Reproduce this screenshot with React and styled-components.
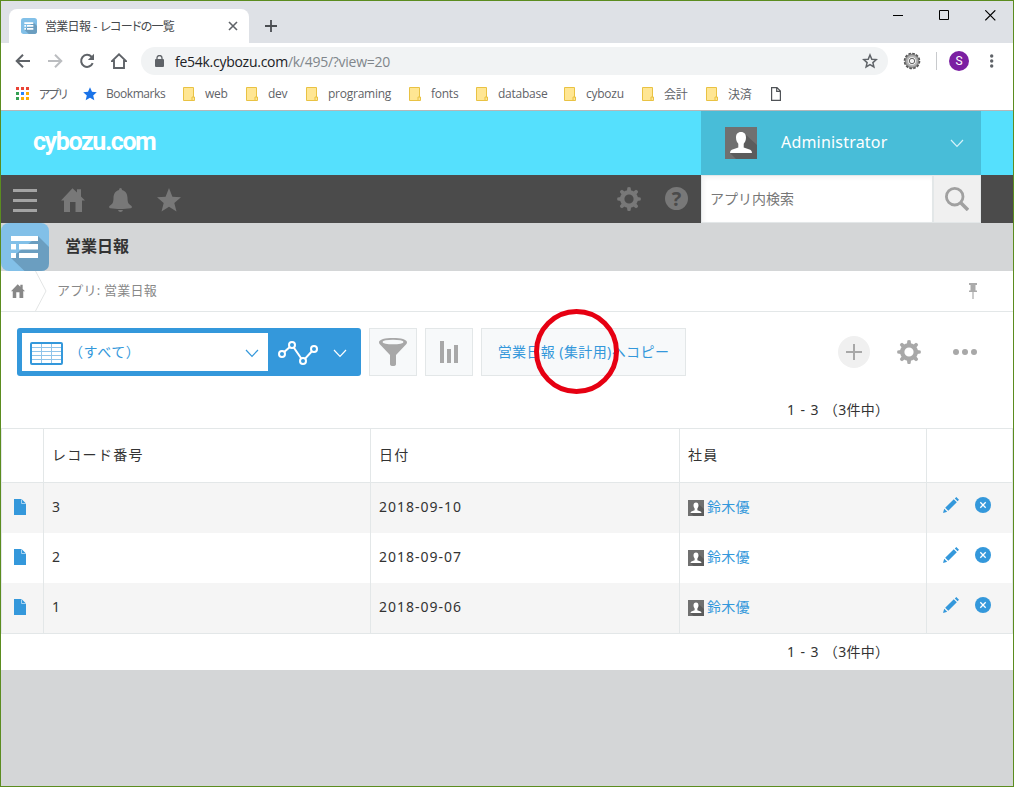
import React from 'react'
import styled, { createGlobalStyle } from 'styled-components';

const bookmarks = [
    { title: "web", width: 63 },
    { title: "dev", width: 60 },
    { title: "programing", width: 103 },
    { title: "fonts", width: 67 },
    { title: "database", width: 88 },
    { title: "cybozu", width: 78 },
    { title: "会計", width: 64 },
    { title: "決済", width: 65 },
];

const records = [
    { id: "3", date: "2018-09-10", member: "鈴木優" },
    { id: "2", date: "2018-09-07", member: "鈴木優" },
    { id: "1", date: "2018-09-06", member: "鈴木優" },
];

const teeth = [0, 45, 90, 135, 180, 225, 270, 315];

function Gear({ size = 24, color }) {
    return (
        <svg width={size} height={size} viewBox="0 0 24 24">
            <circle cx="12" cy="12" r="6.8" fill="none" stroke={color} strokeWidth="4.4" />
            {teeth.map((angle) => (
                <path key={angle} d="M9.9 4 L10.4 0.6 Q12 -0.4 13.6 0.6 L14.1 4z" fill={color} transform={`rotate(${angle} 12 12)`} />
            ))}
        </svg>
    )
}

function House({ size = 24, color }) {
    return (
        <svg width={size} height={size} viewBox="0 0 24 24">
            <path d="M0 12.5 L11.5 0.3 L16 4.6 V1.2 H20 V8.6 L24 12.5 H21 V24 H14.5 V14 H9 V24 H3 V12.5z" fill={color} />
        </svg>
    )
}

function Chevron({ color }) {
    return (
        <svg width="14" height="9" viewBox="0 0 14 9">
            <path d="M1 1 L7 7.3 L13 1" fill="none" stroke={color} strokeWidth="1.2" />
        </svg>
    )
}

function Person({ size }) {
    return (
        <svg width={size} height={size} viewBox="0 0 32 32">
            <path d="M0 0h32v32H0z" fill="#707070" />
            <path d="M20 7 L32 18 V32 H11 L5 26 L18 22z" fill="#5c5c5c" />
            <path d="M16 5c3.4 0 5 2.2 5 5.6 0 3-1 4.8-2.3 6.2v3.6l6.5 2.4q1.8.9 1.8 3.2H5q0-2.3 1.8-3.2l6.5-2.4v-3.6C12 15.4 11 13.6 11 10.6 11 7.2 12.6 5 16 5z" fill="#fff" />
        </svg>
    )
}

function AppIcon({ size }) {
    return (
        <svg width={size} height={size} viewBox="0 0 48 48">
            <rect width="48" height="48" rx="8" fill="#82c0e8" />
            <path d="M37 13 L48 24 V40 Q48 48 40 48 H23.5 L10 35z" fill="#6b9ec0" />
            <path d="M10 13h27v5H10zM10 21h5v5.5h-5zM18 21h19v5.5H18zM10 30h5v5h-5zM18 30h19v5H18z" fill="#fff" />
        </svg>
    )
}

function Browser() {
    return (
        <>
            <TabBar>
                <Tab>
                    <AppIcon size={16} />
                    <TabTitle>営業日報 - レコードの一覧</TabTitle>
                    <svg width="10" height="10" viewBox="0 0 10 10">
                        <path d="M1 1 L9 9 M9 1 L1 9" stroke="#5f6368" strokeWidth="1.6" />
                    </svg>
                </Tab>
                <NewTab width="12" height="12" viewBox="0 0 12 12">
                    <path d="M6 0v12M0 6h12" stroke="#4a4d51" strokeWidth="1.8" />
                </NewTab>
                <WindowButtons>
                    <svg width="11" height="11" viewBox="0 0 11 11"><path d="M0 5.5h10" stroke="#000" /></svg>
                    <svg width="11" height="11" viewBox="0 0 11 11"><path d="M.5.5h9v9h-9z" fill="none" stroke="#000" /></svg>
                    <svg width="11" height="11" viewBox="0 0 11 11"><path d="M.3.3l10 10M10.3.3l-10 10" stroke="#000" strokeWidth="1.2" /></svg>
                </WindowButtons>
            </TabBar>
            <AddressRow>
                <NavIcons>
                    <svg width="16" height="16" viewBox="0 0 16 16"><path d="M15 8H2M8 1.7L1.7 8 8 14.3" fill="none" stroke="#5f6368" strokeWidth="2" /></svg>
                    <svg width="16" height="16" viewBox="0 0 16 16"><path d="M1 8h13M8 1.7L14.3 8 8 14.3" fill="none" stroke="#bbbdc0" strokeWidth="2" /></svg>
                    <svg width="16" height="16" viewBox="0 0 16 16">
                        <path d="M13.7 10.2A6 6 0 1 1 12.5 3.7L14 5.3" fill="none" stroke="#5f6368" strokeWidth="2" />
                        <path d="M15 .8V7H8.8z" fill="#5f6368" />
                    </svg>
                    <svg width="16" height="16" viewBox="0 0 16 16"><path d="M3 8v7h10V8h2L8 1.3 1 8z" fill="none" stroke="#5f6368" strokeWidth="1.9" /></svg>
                </NavIcons>
                <AddressBar>
                    <svg width="9" height="12" viewBox="0 0 9 12">
                        <path d="M2 5V3a2.5 2.5 0 0 1 5 0v2" fill="none" stroke="#5f6368" strokeWidth="1.3" />
                        <rect y="4" width="9" height="8" rx="1" fill="#5f6368" />
                    </svg>
                    <Url><b>fe54k.cybozu.com</b>/k/495/?view=20</Url>
                    <svg width="16" height="16" viewBox="0 0 16 16">
                        <path d="M8 2l1.8 4.2 4.5.4-3.4 3 1 4.4L8 11.7 4.1 14l1-4.4-3.4-3 4.500-.4z" fill="none" stroke="#5f6368" strokeWidth="1.5" />
                    </svg>
                </AddressBar>
                <Extension>
                    <svg width="18" height="18" viewBox="0 0 18 18">
                        <circle cx="9" cy="9" r="5.6" fill="none" stroke="#b4b4b4" strokeWidth="3.6" />
                        <circle cx="9" cy="9" r="7.5" fill="none" stroke="#555" strokeWidth="1.6" strokeDasharray="2.6 1.33" />
                        <circle cx="9" cy="9" r="6.4" fill="none" stroke="#666" strokeWidth=".7" />
                        <circle cx="9" cy="9" r="2.7" fill="#f2f2f2" stroke="#666" />
                    </svg>
                </Extension>
                <Profile>S</Profile>
                <svg width="4" height="14" viewBox="0 0 4 14">
                    <g fill="#5f6368"><circle cx="1.7" cy="2" r="1.7" /><circle cx="1.7" cy="7" r="1.7" /><circle cx="1.7" cy="12" r="1.7" /></g>
                </svg>
            </AddressRow>
            <BookmarkRow>
                <svg width="14" height="14" viewBox="0 0 14 14">
                    <path d="M0 0h3v3H0zM5 0h3v3H5zM10 0h3v3h-3z" fill="#ea4335" />
                    <path d="M0 5h3v3H0zM0 10h3v3H0z" fill="#34a053" />
                    <path d="M5 5h3v3H5z" fill="#2684fc" />
                    <path d="M10 5h3v3h-3zM5 10h3v3H5zM10 10h3v3h-3z" fill="#fbac05" />
                </svg>
                <AppsLabel>アプリ</AppsLabel>
                <svg width="14" height="14" viewBox="0 0 14 14">
                    <path d="M7 .3l2 4.4 4.8.5-3.600 3.200 1.100 4.900L7 10.800l-4.300 2.500 1.100-4.900L.2 5.200 5 4.700z" fill="#1a73e8" />
                </svg>
                <BookmarksLabel>Bookmarks</BookmarksLabel>
                {bookmarks.map((item) => (
                    <Bookmark key={item.title} $width={item.width}>
                        <svg width="12" height="14" viewBox="0 0 12 14">
                            <path d="M.5.5h10v9.500h1v3.500H.5z" fill="#ffe693" stroke="#e9c243" />
                            <path d="M9 13v-3h2" fill="none" stroke="#e9c243" />
                        </svg>
                        {item.title}
                    </Bookmark>
                ))}
                <svg width="10" height="14" viewBox="0 0 10 14">
                    <path d="M.6.6h5.400l3.400 3.400v9.400H.6zM5.700.6v3.700h3.700" fill="none" stroke="#505357" strokeWidth="1.2" />
                </svg>
            </BookmarkRow>
        </>
    )
}

function Header() {
    return (
        <>
            <Brand>
                <Logo>cybozu.com</Logo>
                <User>
                    <Person size={32} />
                    <UserName>Administrator</UserName>
                    <Chevron color="#d6f3fa" />
                </User>
            </Brand>
            <GlobalNav>
                <NavGroup $top={2}>
                    <svg width="24" height="24" viewBox="0 0 24 24"><path d="M0 2.500h24M0 12.500h24M0 22.500h24" stroke="#a3a3a3" strokeWidth="3" /></svg>
                    <House color="#787878" />
                    <svg width="24" height="24" viewBox="0 0 24 24">
                        <path d="M11.500 0q1.500 0 1.500 2c4 1 5.500 4.500 5.500 8 0 4.500 1 6 3.500 7.500 1.500 1 1 2.500-.5 2.700-6 .9-14 .9-20 0-1.500-.2-2-1.700-.5-2.700C3.500 16 4.500 14.500 4.500 10c0-3.500 1.500-7 5.500-8q0-2 1.500-2zM9 22h5q-.5 2-2.500 2T9 22z" fill="#787878" />
                    </svg>
                    <svg width="24" height="24" viewBox="0 0 24 24"><path d="M12 0l3.400 8.800 8.600.4-6.700 5.800 2.200 8.500L12 18.800l-7.500 4.700L6.700 15 0 9.200l8.600-.4z" fill="#787878" /></svg>
                </NavGroup>
                <NavGroup>
                    <Gear color="#787878" />
                    <Help>?</Help>
                </NavGroup>
                <SearchBox>アプリ内検索</SearchBox>
                <SearchButton>
                    <svg width="24" height="24" viewBox="0 0 24 24">
                        <circle cx="9.700" cy="9.700" r="8.300" fill="none" stroke="#a0a0a0" strokeWidth="2.800" />
                        <path d="M15.500 15.500L23 23" stroke="#a0a0a0" strokeWidth="3.500" />
                    </svg>
                </SearchButton>
            </GlobalNav>
            <AppBar>
                <AppIcon size={48} />
                <AppName>営業日報</AppName>
            </AppBar>
            <Breadcrumb>
                <House size={14} color="#888" />
                <svg width="12" height="40" viewBox="0 0 12 40"><path d="M.5 0L11 20 .5 40" fill="none" stroke="#e3e5e5" /></svg>
                <Crumb>アプリ: 営業日報</Crumb>
                <svg width="10" height="16" viewBox="0 0 10 16"><path d="M1 0h8v2H7.500v5.500H9V9H5.600v7H4.400V9H1V7.500h1.500V2H1z" fill="#ababab" /></svg>
            </Breadcrumb>
        </>
    )
}

function Toolbar() {
    return (
        <ToolRow>
            <ViewPicker>
                <ViewSelect>
                    <svg width="33" height="23" viewBox="0 0 33 23">
                        <path d="M11.500 1v21M21.500 1v21M1 5.500h31M1 9.500h31M1 13.500h31M1 17.500h31" stroke="#8fc4ea" />
                        <rect x="1" y="1" width="31" height="21" rx="1" fill="none" stroke="#3498db" strokeWidth="2" />
                    </svg>
                    <ViewName>（すべて）</ViewName>
                    <Chevron color="#3498db" />
                </ViewSelect>
                <svg width="40" height="26" viewBox="0 0 40 26">
                    <path d="M4 15L14 6 25 22 36 10" fill="none" stroke="#fff" strokeWidth="2" />
                    <g fill="#3498db" stroke="#fff" strokeWidth="2">
                        <circle cx="4" cy="15" r="3" />
                        <circle cx="14" cy="6" r="3" />
                        <circle cx="25" cy="22" r="3" />
                        <circle cx="36" cy="10" r="3" />
                    </g>
                </svg>
                <GraphArrow><Chevron color="#fff" /></GraphArrow>
            </ViewPicker>
            <ToolButton>
                <svg width="28" height="28" viewBox="0 0 28 28">
                    <path d="M0 4.200C0 1.500 6 0 14 0s14 1.500 14 4.200c0 1.300-1 2.300-2 3.300L17 17v9q0 2-3 2t-3-2v-9L2 7.500C1 6.500 0 5.500 0 4.200z" fill="#a8a8a8" />
                    <ellipse cx="14" cy="4" rx="10.500" ry="2.300" fill="#f7f9fa" />
                </svg>
            </ToolButton>
            <ToolButton>
                <svg width="18" height="22" viewBox="0 0 18 22"><path d="M0 0h4v22H0zM7 8h4v14H7zM14 4h4v18h-4z" fill="#a8a8a8" /></svg>
            </ToolButton>
            <CopyButton>
                営業日報 (集計用)へコピー
                <Marker width="86" height="86" viewBox="0 0 86 86">
                    <circle cx="43.500" cy="43.500" r="40" fill="none" stroke="#e60012" strokeWidth="5" />
                </Marker>
            </CopyButton>
            <Actions>
                <AddButton>
                    <svg width="16" height="16" viewBox="0 0 16 16"><path d="M8 0v16M0 8h16" stroke="#a8a8a8" strokeWidth="2" /></svg>
                </AddButton>
                <Gear color="#a8a8a8" />
                <MoreIcon width="24" height="6" viewBox="0 0 24 6"><g fill="#a8a8a8"><circle cx="3" cy="3" r="3" /><circle cx="12" cy="3" r="3" /><circle cx="21" cy="3" r="3" /></g></MoreIcon>
            </Actions>
        </ToolRow>
    )
}

function RecordTable() {
    let renderRecords = () => {
        return records.map((record) => (
            <Row key={record.id}>
                <Cell>
                    <FileIcon width="12" height="16" viewBox="0 0 12 16">
                        <path d="M0 0h7.500L12 4.500V16H0z" fill="#3498db" />
                        <path d="M7.500 .3V4.500H12" fill="none" stroke="#a9d3f0" />
                    </FileIcon>
                </Cell>
                <Cell>{record.id}</Cell>
                <Cell>{record.date}</Cell>
                <Cell>
                    <Member><Person size={16} /><span>{record.member}</span></Member>
                </Cell>
                <Cell>
                    <RowActions>
                        <svg width="16" height="16" viewBox="0 0 16 16">
                            <path d="M0 16l1.200-4.300 3 3zM2.200 10.700L10.800 2.300l3 3-8.500 8.400zM11.800 1.500L13.300 0 16 2.800l-1.400 1.500z" fill="#3498db" />
                        </svg>
                        <svg width="16" height="16" viewBox="0 0 16 16">
                            <circle cx="8" cy="8" r="8" fill="#3498db" />
                            <path d="M5.300 5.300l5.400 5.400M10.700 5.300l-5.400 5.400" stroke="#fff" strokeWidth="1.300" />
                        </svg>
                    </RowActions>
                </Cell>
            </Row>
        ))
    }
    return (
        <Table>
            <colgroup>
                <col width="42" /><col width="327" /><col width="309" /><col width="247" /><col width="87" />
            </colgroup>
            <thead>
                <tr>
                    <HeadCell />
                    <HeadCell>レコード番号</HeadCell>
                    <HeadCell>日付</HeadCell>
                    <HeadCell>社員</HeadCell>
                    <HeadCell />
                </tr>
            </thead>
            <tbody>{renderRecords()}</tbody>
        </Table>
    )
}

function App() {
    return (
        <Window>
            <GlobalStyle />
            <Browser />
            <Header />
            <Content>
                <Toolbar />
                <Pager $height={52} $top={16}>1 - 3 （3件中）</Pager>
                <RecordTable />
                <Pager $height={36} $top={0}>1 - 3 （3件中）</Pager>
            </Content>
        </Window>
    )
};

const GlobalStyle = createGlobalStyle`
    * {
        box-sizing:border-box;
    }
    body {
        margin:0;
    }
    svg {
        display:block;
        flex:none;
    }
`;
const Window = styled.div`
    width:1014px;
    height:787px;
    border:1px solid #5b8c1f;
    background:#d4d6d7;
    overflow:hidden;
    font-family:"Noto Sans", "Noto Sans CJK JP", sans-serif;
    font-size:14px;
    color:#333;
    white-space:nowrap;
`;
const TabBar = styled.div`
    display:flex;
    align-items:flex-end;
    height:42px;
    padding-left:8px;
    background:#dee1e6;
`;
const Tab = styled.div`
    display:flex;
    align-items:center;
    width:240px;
    height:34px;
    padding:0 11px 0 12px;
    border-radius:8px 8px 0 0;
    background:#fff;
`;
const TabTitle = styled.span`
    flex:1;
    margin-left:8px;
    font-family:"Open Sans", "Noto Sans CJK JP", sans-serif;
    font-size:12px;
    font-feature-settings:"palt";
    letter-spacing:-.7px;
    word-spacing:1px;
    color:#45484c;
`;
const NewTab = styled.svg`
    margin:0 0 11px 16px;
`;
const WindowButtons = styled.div`
    display:flex;
    gap:35px;
    align-self:flex-start;
    margin:9px 17px 0 auto;
`;
const AddressRow = styled.div`
    display:flex;
    align-items:center;
    height:36px;
    padding-left:14px;
    background:#fff;
`;
const NavIcons = styled.div`
    display:flex;
    gap:16px;
    width:126px;
`;
const AddressBar = styled.div`
    display:flex;
    align-items:center;
    width:747px;
    height:28px;
    padding:0 10px 0 14px;
    border-radius:14px;
    background:#f1f3f4;
`;
const Url = styled.span`
    flex:1;
    margin-left:11px;
    font-family:"Open Sans", sans-serif;
    font-size:14px;
    letter-spacing:-.27px;
    color:#80868b;
    b {
        font-weight:normal;
        color:#202124;
    }
`;
const Extension = styled.div`
    width:34px;
    height:18px;
    margin-left:15px;
    border-right:1px solid #c8cacd;
`;
const Profile = styled.div`
    width:20px;
    height:20px;
    margin:0 21px 0 12px;
    border-radius:50%;
    background:#7b1fa2;
    color:#fff;
    font:12px/20px Roboto, sans-serif;
    text-align:center;
`;
const BookmarkRow = styled.div`
    display:flex;
    align-items:center;
    height:32px;
    padding:0 0 2px 15px;
    border-bottom:1px solid #b5b7b9;
    background:#fff;
    font-family:"Open Sans", "Noto Sans CJK JP", sans-serif;
    font-size:12px;
    color:#5f6368;
`;
const AppsLabel = styled.span`
    width:44px;
    margin-left:9px;
    font-feature-settings:"palt";
    letter-spacing:-1.6px;
`;
const BookmarksLabel = styled.span`
    width:77px;
    margin-left:9px;
    letter-spacing:-.45px;
`;
const Bookmark = styled.div`
    display:flex;
    align-items:center;
    gap:10px;
    width:${(props) => props.$width}px;
    letter-spacing:-.25px;
`;
const Brand = styled.div`
    display:flex;
    justify-content:space-between;
    height:64px;
    padding:0 32px;
    background:#55e0fd;
`;
const Logo = styled.div`
    color:#fff;
    font:bold 25px/62px Roboto, sans-serif;
    letter-spacing:-1.4px;
`;
const User = styled.div`
    display:flex;
    align-items:center;
    width:280px;
    padding:0 17px 0 24px;
    background:#48bdd8;
    color:#fff;
    font-size:16px;
`;
const UserName = styled.span`
    flex:1;
    margin-left:24px;
    padding-bottom:2px;
    letter-spacing:.2px;
`;
const GlobalNav = styled.div`
    display:flex;
    align-items:center;
    height:48px;
    padding:0 32px 0 12px;
    background:#4b4b4b;
`;
const NavGroup = styled.div`
    display:flex;
    gap:24px;
    padding-top:${(props) => props.$top || 0}px;
    & + & {
        margin:0 13px 0 auto;
    }
`;
const Help = styled.div`
    width:23px;
    height:23px;
    border-radius:50%;
    background:#787878;
    color:#4b4b4b;
    font:bold 20px/24px "Open Sans", sans-serif;
    text-align:center;
`;
const SearchBox = styled.div`
    width:232px;
    height:48px;
    padding-left:8px;
    border:1px solid #e3e7e8;
    background:#fff;
    box-shadow:inset 2px 2px 4px #f3f3f3;
    color:#777;
    line-height:45px;
`;
const SearchButton = styled.div`
    display:flex;
    align-items:center;
    justify-content:center;
    width:48px;
    height:48px;
    border:1px solid #e3e7e8;
    background:#f0f0f0;
`;
const AppBar = styled.div`
    display:flex;
    align-items:center;
    height:48px;
`;
const AppName = styled.h1`
    margin:0 0 5px 16px;
    font-size:16px;
    font-weight:bold;
`;
const Breadcrumb = styled.div`
    display:flex;
    align-items:center;
    gap:10px;
    height:41px;
    padding:0 35px 0 10px;
    border-bottom:1px solid #e3e7e8;
    background:#fff;
`;
const Crumb = styled.span`
    flex:1;
    padding-bottom:4px;
    font-size:13px;
    letter-spacing:.25px;
    color:#888;
`;
const Content = styled.div`
    background:#fff;
    padding-top:16px;
`;
const ToolRow = styled.div`
    display:flex;
    gap:8px;
    height:48px;
    padding:0 36px 0 16px;
`;
const ViewPicker = styled.div`
    display:flex;
    align-items:center;
    width:344px;
    padding-left:5px;
    border-radius:3px;
    background:#3498db;
`;
const ViewSelect = styled.div`
    display:flex;
    align-items:center;
    width:246px;
    height:38px;
    margin-right:10px;
    padding:2px 9px 0 8px;
    background:#fff;
`;
const ViewName = styled.span`
    flex:1;
    margin-left:6px;
    padding-bottom:5px;
    letter-spacing:.6px;
    color:#3498db;
`;
const GraphArrow = styled.div`
    margin-left:15px;
    padding-top:2px;
`;
const ToolButton = styled.div`
    display:flex;
    align-items:center;
    justify-content:center;
    width:48px;
    border:1px solid #e3e7e8;
    background:#f7f9fa;
`;
const CopyButton = styled(ToolButton)`
    position:relative;
    width:205px;
    padding-bottom:2px;
    letter-spacing:.4px;
    color:#3498db;
`;
const Marker = styled.svg`
    position:absolute;
    left:51px;
    top:-21px;
`;
const Actions = styled.div`
    display:flex;
    align-items:center;
    gap:27px;
    margin-left:auto;
`;
const AddButton = styled.div`
    display:flex;
    align-items:center;
    justify-content:center;
    width:32px;
    height:32px;
    border-radius:50%;
    background:#f0f0f0;
`;
const MoreIcon = styled.svg`
    margin-left:5px;
`;
const Pager = styled.div`
    height:${(props) => props.$height}px;
    padding:${(props) => props.$top}px 0 0 786px;
    line-height:36px;
    letter-spacing:.3px;
    word-spacing:1.2px;
`;
const Table = styled.table`
    width:1012px;
    table-layout:fixed;
    border-collapse:separate;
    border-spacing:0;
    border-bottom:1px solid #e3e7e8;
    letter-spacing:1px;
`;
const Cell = styled.td`
    height:50px;
    padding:0 8px 4px;
    border-left:1px solid #e3e7e8;
    &:last-child {
        border-right:1px solid #e3e7e8;
    }
`;
const HeadCell = styled.th`
    height:55px;
    padding:0 8px 4px;
    border:solid #e3e7e8;
    border-width:1px 0 1px 1px;
    font-weight:normal;
    text-align:left;
    letter-spacing:1.3px;
    &:last-child {
        border-right-width:1px;
    }
`;
const Row = styled.tr`
    background:#fff;
    &:nth-child(odd) {
        background:#f5f5f5;
    }
`;
const FileIcon = styled.svg`
    margin:2px 0 0 4px;
`;
const Member = styled.div`
    display:flex;
    align-items:flex-end;
    gap:3px;
    color:#3498db;
    letter-spacing:.2px;
`;
const RowActions = styled.div`
    display:flex;
    gap:16px;
    margin:0 0 3px 8px;
`;

export default App;
